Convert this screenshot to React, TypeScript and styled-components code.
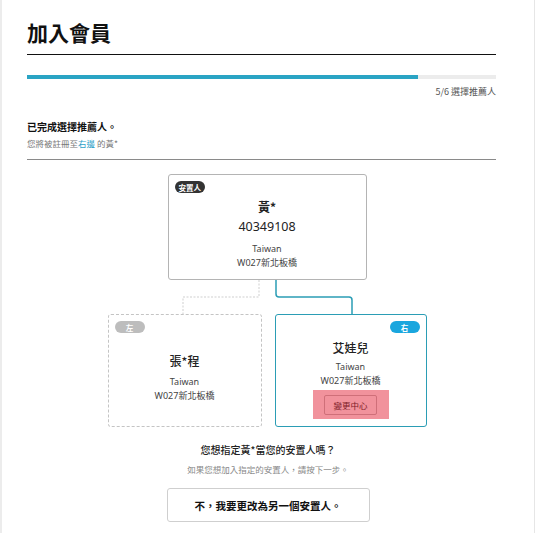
import React from "react";
import styled, { createGlobalStyle } from "styled-components";

const Global = createGlobalStyle`
  html, body { margin: 0; padding: 0; background: #fff; }
  body { font-family: "Noto Sans", "Noto Sans CJK TC", sans-serif; color: #222; }
  * { box-sizing: border-box; }
`;

const Page = styled.div`
  min-height: 533px;
  border-left: 2px solid #ececec;
  border-right: 1px solid #e6e6e6;
  padding-bottom: 20px;
`;

const Header = styled.div`
  padding: 0 38px 0 25px;
`;

const Title = styled.h1`
  margin: 0;
  padding-top: 17px;
  font-size: 21px;
  line-height: 30px;
  font-weight: 700;
  color: #111;
  font-family: "Noto Sans CJK TC", sans-serif;
  padding-bottom: 7px;
  border-bottom: 1px solid #111;
`;

const Progress = styled.div`
  margin-top: 20px;
  height: 4px;
  background: #ececec;
`;

const ProgressFill = styled.div`
  height: 100%;
  background: #2aa4c4;
`;

const StepLabel = styled.div`
  text-align: right;
  font-size: 9px;
  line-height: 14px;
  margin-top: 6px;
  color: #555;
  font-family: "Noto Sans CJK TC", sans-serif;
`;

const Summary = styled.div`
  margin-top: 20px;
  padding-bottom: 8px;
  border-bottom: 1px solid #8a8a8a;
`;

const SummaryTitle = styled.div`
  font-size: 10px;
  line-height: 16px;
  font-weight: 700;
  color: #111;
  font-family: "Noto Sans CJK TC", sans-serif;
`;

const SummaryText = styled.div`
  font-size: 8.5px;
  line-height: 16px;
  color: #777;
  font-family: "Noto Sans CJK TC", sans-serif;
`;

const Link = styled.span`
  color: #2f9fc8;
`;

const Tree = styled.div`
  width: 320px;
  margin: 14px 0 0 calc(50% - 161px);
  display: flex;
  flex-direction: column;
  align-items: center;
`;

const Card = styled.div<{ $variant: "top" | "empty" | "active"; $pt: number }>`
  position: relative;
  width: ${(p) => (p.$variant === "top" ? "199px" : "100%")};
  height: ${(p) => (p.$variant === "top" ? "106px" : "113px")};
  padding-top: ${(p) => p.$pt}px;
  display: flex;
  flex-direction: column;
  align-items: center;
  background: #fff;
  border-radius: 3px;
  border: ${(p) =>
    p.$variant === "top"
      ? "1px solid #b4b4b4"
      : p.$variant === "empty"
      ? "1px dashed #c4c4c4"
      : "1.5px solid #2b9db5"};
`;

const Badge = styled.span<{ $tone: "dark" | "gray" | "blue"; $side: "left" | "right" }>`
  position: absolute;
  top: 6px;
  ${(p) => (p.$side === "left" ? "left: 6px;" : "right: 6px;")}
  min-width: 30px;
  height: 12px;
  padding: 0 4px;
  border-radius: 6px;
  display: flex;
  align-items: center;
  justify-content: center;
  font-size: 7.5px;
  font-weight: 700;
  color: #fff;
  font-family: "Noto Sans CJK TC", sans-serif;
  background: ${(p) => (p.$tone === "dark" ? "#333" : p.$tone === "gray" ? "#bdbdbd" : "#1aa6de")};
`;

const Name = styled.div<{ $bold?: boolean }>`
  font-size: 12px;
  line-height: 20px;
  font-weight: ${(p) => (p.$bold ? 700 : 500)};
  color: #222;
  font-family: "Noto Sans CJK TC", sans-serif;
`;

const Number = styled.div`
  font-size: 12.5px;
  line-height: 20px;
  color: #222;
`;

const Address = styled.div<{ $mt: number }>`
  margin-top: ${(p) => p.$mt}px;
  font-size: 9px;
  line-height: 14px;
  color: #444;
  text-align: center;
  font-family: "Noto Sans", "Noto Sans CJK TC", sans-serif;
`;

const Highlight = styled.div`
  margin-top: 2px;
  width: 76px;
  height: 29px;
  background: #f1929c;
  display: flex;
  align-items: center;
  justify-content: center;
`;

const ChangeButton = styled.button`
  width: 53px;
  height: 20px;
  border: 1px solid #cf6f79;
  border-radius: 2px;
  background: transparent;
  font-size: 8.5px;
  color: #7e1c28;
  padding: 0;
  font-family: "Noto Sans CJK TC", sans-serif;
`;

const Connector = styled.svg`
  display: block;
  width: 320px;
  height: 34px;
`;

const Row = styled.div`
  width: 319px;
  display: grid;
  grid-template-columns: 154px 152px;
  gap: 13px;
`;

const Question = styled.div`
  margin-top: 15px;
  text-align: center;
  font-size: 10px;
  line-height: 16px;
  font-weight: 500;
  color: #222;
  font-family: "Noto Sans CJK TC", sans-serif;
`;

const SubQuestion = styled.div`
  margin-top: 4px;
  text-align: center;
  font-size: 8.5px;
  line-height: 14px;
  color: #888;
  font-family: "Noto Sans CJK TC", sans-serif;
`;

const AltButton = styled.button`
  display: block;
  margin: 12px auto 0;
  width: 203px;
  height: 34px;
  background: #fff;
  border: 1px solid #cfcfcf;
  border-radius: 3px;
  font-size: 10.5px;
  font-weight: 700;
  color: #111;
  font-family: "Noto Sans CJK TC", sans-serif;
`;

export default function App() {
  return (
    <>
      <Global />
      <Page>
        <Header>
          <Title>加入會員</Title>
          <Progress>
            <ProgressFill style={{ width: `${(5 / 6) * 100}%` }} />
          </Progress>
          <StepLabel>5/6 選擇推薦人</StepLabel>
          <Summary>
            <SummaryTitle>已完成選擇推薦人。</SummaryTitle>
            <SummaryText>
              您將被註冊至<Link>右邊</Link> 的黃*
            </SummaryText>
          </Summary>
        </Header>
        <Tree>
          <Card $variant="top" $pt={22}>
            <Badge $tone="dark" $side="left">安置人</Badge>
            <Name $bold>黃*</Name>
            <Number>40349108</Number>
            <Address $mt={5}>
              Taiwan
              <br />
              W027新北板橋
            </Address>
          </Card>
          <Connector viewBox="0 0 320 34">
            <path d="M152 0 V17 H76 V34" fill="none" stroke="#cfcfcf" strokeWidth="1" strokeDasharray="2 1.5" />
            <path d="M169 0 V14 Q169 17 172 17 H242 Q245 17 245 20 V34" fill="none" stroke="#2b9db5" strokeWidth="1.5" />
          </Connector>
          <Row>
            <Card $variant="empty" $pt={36}>
              <Badge $tone="gray" $side="left">左</Badge>
              <Name>張*程</Name>
              <Address $mt={4}>
                Taiwan
                <br />
                W027新北板橋
              </Address>
            </Card>
            <Card $variant="active" $pt={23}>
              <Badge $tone="blue" $side="right">右</Badge>
              <Name>艾娃兒</Name>
              <Address $mt={2}>
                Taiwan
                <br />
                W027新北板橋
              </Address>
              <Highlight>
                <ChangeButton>變更中心</ChangeButton>
              </Highlight>
            </Card>
          </Row>
        </Tree>
        <Question>您想指定黃*當您的安置人嗎？</Question>
        <SubQuestion>如果您想加入指定的安置人，請按下一步。</SubQuestion>
        <AltButton>不，我要更改為另一個安置人。</AltButton>
      </Page>
    </>
  );
}
